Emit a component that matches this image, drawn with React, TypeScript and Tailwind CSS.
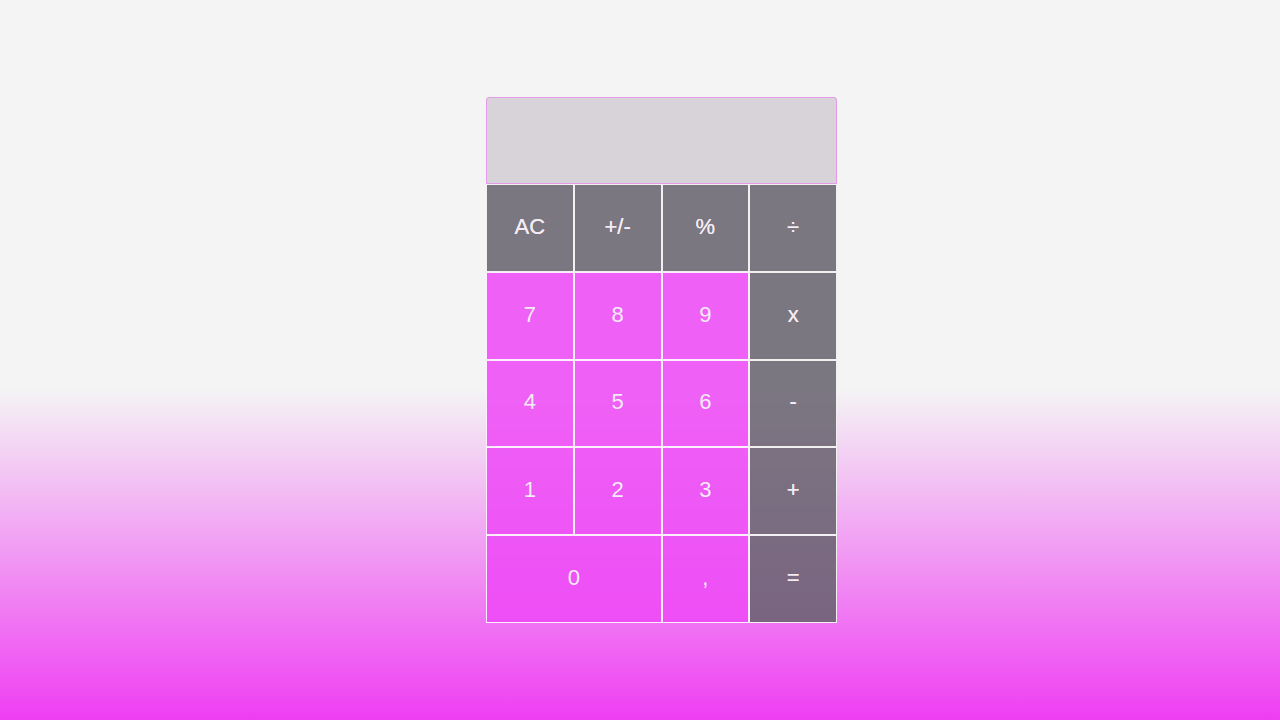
import React from 'react'

type Key = {
  label: string
  kind: 'op' | 'num'
  wide?: boolean
}

const keys: Key[] = [
  { label: 'AC', kind: 'op' },
  { label: '+/-', kind: 'op' },
  { label: '%', kind: 'op' },
  { label: '÷', kind: 'op' },
  { label: '7', kind: 'num' },
  { label: '8', kind: 'num' },
  { label: '9', kind: 'num' },
  { label: 'x', kind: 'op' },
  { label: '4', kind: 'num' },
  { label: '5', kind: 'num' },
  { label: '6', kind: 'num' },
  { label: '-', kind: 'op' },
  { label: '1', kind: 'num' },
  { label: '2', kind: 'num' },
  { label: '3', kind: 'num' },
  { label: '+', kind: 'op' },
  { label: '0', kind: 'num', wide: true },
  { label: ',', kind: 'num' },
  { label: '=', kind: 'op' },
]

export default function App() {
  return (
    <div
      className="w-full h-[720px] overflow-hidden bg-[linear-gradient(180deg,#f4f4f4_0%,#f4f4f4_54%,#ee3ef2_100%)]"
      style={{ fontFamily: '"Liberation Sans", Arial, sans-serif' }}
    >
      <div className="ml-[486px] pt-[97px] w-[351px]">
        {/* display */}
        <div className="h-[87px] bg-[#d8d3d8] border border-[#e29be8] rounded-t-[3px]" />

        {/* keypad */}
        <div className="grid grid-cols-4">
          {keys.map((k) => (
            <button
              key={k.label}
              className={
                'h-[87.8px] border border-white/90 flex items-center justify-center text-[22px] text-[#f4ecf4] pb-[3px] ' +
                (k.wide ? 'col-span-2 ' : '') +
                (k.kind === 'op'
                  ? 'bg-[rgba(103,98,110,0.86)] [text-shadow:0_0_0.6px_#f4ecf4]'
                  : 'bg-[rgba(238,72,246,0.86)]')
              }
            >
              {k.label}
            </button>
          ))}
        </div>
      </div>
    </div>
  )
}
